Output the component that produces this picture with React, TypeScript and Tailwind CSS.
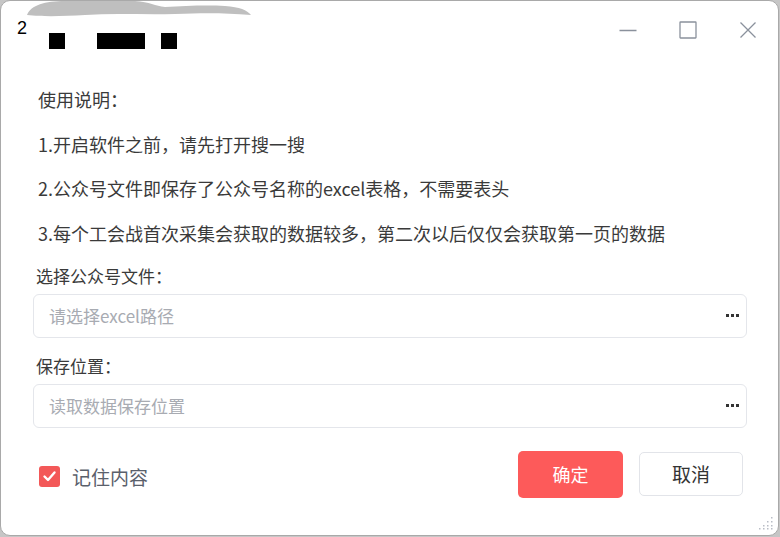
import React, { useState } from "react";

const font = { fontFamily: '"Noto Sans CJK SC", "Noto Sans", sans-serif' };

const notes = [
  "1.开启软件之前，请先打开搜一搜",
  "2.公众号文件即保存了公众号名称的excel表格，不需要表头",
  "3.每个工会战首次采集会获取的数据较多，第二次以后仅仅会获取第一页的数据",
];

function PathInput({ placeholder }: { placeholder: string }) {
  return (
    <div className="flex h-[44px] items-center rounded-[6px] border border-[#e4e6eb] bg-white pl-[15px] pr-[4px]">
      <input
        placeholder={placeholder}
        className="flex-1 bg-transparent text-[17px] text-[#333] outline-none placeholder:text-[#a8abb2]"
        style={font}
      />
      <span className="flex w-[20px] justify-center gap-[2px]">
        <i className="block h-[3px] w-[3px] bg-[#333]" />
        <i className="block h-[3px] w-[3px] bg-[#333]" />
        <i className="block h-[3px] w-[3px] bg-[#333]" />
      </span>
    </div>
  );
}

export default function App() {
  const [remember, setRemember] = useState(true);

  return (
    <div className="h-[537px] w-[780px] bg-[#c6c6c6]" style={font}>
      <div className="relative flex h-[536px] w-[779px] flex-col overflow-hidden rounded-[10px] border border-[#a9a9a9] bg-white">
        {/* redaction scribble over the title */}
        <svg className="absolute left-[24px] top-0" width="230" height="18" viewBox="0 0 230 18">
          <path
            d="M2 14 C6 4 20 0 40 0 L110 0 C125 1 130 5 140 6 C160 5 180 4 200 5 C215 6 222 9 226 14 C200 12 180 12 150 13 C120 14 90 12 60 14 C40 15 20 16 2 14 Z"
            fill="#bfbfbf"
          />
        </svg>

        {/* title bar */}
        <div className="flex h-[58px] shrink-0 items-start">
          <div className="flex flex-1 items-start pl-[16px] pt-[18px]">
            <span className="text-[18px] leading-[18px] text-black" style={{ fontFamily: '"Liberation Sans", sans-serif' }}>
              2
            </span>
            <span className="ml-[22px] mt-[14px] h-[16px] w-[16px] bg-black" />
            <span className="ml-[32px] mt-[14px] h-[16px] w-[48px] bg-black" />
            <span className="ml-[16px] mt-[14px] h-[16px] w-[16px] bg-black" />
          </div>
          <div className="flex h-[58px] items-center">
            <button className="flex h-[58px] w-[60px] items-center justify-center">
              <svg width="18" height="18" viewBox="0 0 18 18">
                <path d="M0.5 9.5 H17.5" stroke="#8a919c" strokeWidth="1.3" />
              </svg>
            </button>
            <button className="flex h-[58px] w-[60px] items-center justify-center">
              <svg width="18" height="18" viewBox="0 0 18 18">
                <rect x="1" y="1" width="16" height="16" rx="0.5" fill="none" stroke="#8a919c" strokeWidth="1.3" />
              </svg>
            </button>
            <button className="flex h-[58px] w-[60px] items-center justify-center">
              <svg width="18" height="18" viewBox="0 0 18 18">
                <path d="M1.5 1.5 L16.5 16.5 M16.5 1.5 L1.5 16.5" stroke="#8a919c" strokeWidth="1.3" />
              </svg>
            </button>
          </div>
        </div>

        {/* body */}
        <div className="flex flex-1 flex-col pl-[32px] pr-[31px] pt-[18px]">
          <div className="pl-[5px] text-[18px] leading-[44.7px] text-[#3a3a3a]">
            <p>使用说明：</p>
            {notes.map((n) => (
              <p key={n}>{n}</p>
            ))}
          </div>

          <label className="mt-[8px] pl-[3px] text-[17px] leading-[24px] text-[#3a3a3a]">选择公众号文件：</label>
          <div className="mt-[6px]">
            <PathInput placeholder="请选择excel路径" />
          </div>

          <label className="mt-[16px] pl-[3px] text-[17px] leading-[24px] text-[#3a3a3a]">保存位置：</label>
          <div className="mt-[6px]">
            <PathInput placeholder="读取数据保存位置" />
          </div>

          <div className="mt-[23px] flex items-center">
            <button
              onClick={() => setRemember(!remember)}
              className="ml-[6px] mt-[4px] flex h-[21px] w-[21px] items-center justify-center rounded-[3px] bg-[#f35858]"
            >
              {remember && (
                <svg width="15" height="15" viewBox="0 0 15 15">
                  <path d="M2.5 7.5 L6 11 L12.5 3.5" fill="none" stroke="#fff" strokeWidth="2.4" strokeLinecap="round" strokeLinejoin="round" />
                </svg>
              )}
            </button>
            <span className="ml-[12px] mt-[5px] text-[19px] text-[#5a606b]">记住内容</span>

            <div className="ml-auto flex items-center">
              <button className="h-[47px] w-[105px] rounded-[5px] bg-[#fd5a5a] text-[18px] text-white">确定</button>
              <button className="ml-[16px] mr-[4px] h-[44px] w-[104px] rounded-[5px] border border-[#e2e4e9] bg-white text-[19px] text-[#333]">
                取消
              </button>
            </div>
          </div>
        </div>

        {/* resize grip */}
        <svg className="absolute bottom-[5px] right-[5px]" width="14" height="14" viewBox="0 0 14 14">
          {[
            [12, 2], [12, 6], [8, 6], [12, 10], [8, 10], [4, 10], [12, 13], [8, 13], [4, 13], [0, 13],
          ].map(([x, y], i) => (
            <rect key={i} x={x} y={y - 1} width="1.5" height="1.5" fill="#b9bdc6" />
          ))}
        </svg>
      </div>
    </div>
  );
}
